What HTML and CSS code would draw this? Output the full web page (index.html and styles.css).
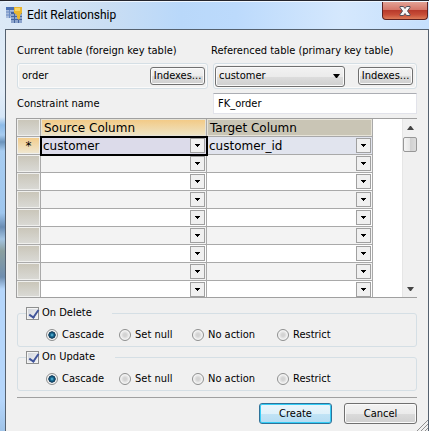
FILE: index.html
```html
<!DOCTYPE html>
<html lang="en">
<head>
<meta charset="utf-8">
<title>Edit Relationship</title>
<link rel="stylesheet" href="styles.css">
</head>
<body>
<svg class="defs" aria-hidden="true">
  <symbol id="down" viewBox="0 0 5 3"><path d="M0 0h5v1H4v1H3v1H2V2H1V1H0z"/></symbol>
</svg>
<main class="window">
  <header class="titlebar">
    <svg class="logo" viewBox="0 0 16 16" aria-hidden="true">
      <rect x="0" y="0" width="11" height="11" fill="#a9bcdc"/>
      <path d="M0 0h11v3H0z" fill="#4a70b4"/>
      <path d="M0 5h11M0 8h11M3.500 3v8" stroke="#6c8cc2" fill="none"/>
      <rect x="5" y="5" width="11" height="11" fill="#8ea5cc"/>
      <path d="M5 5h11v2H5z" fill="#41629f"/>
      <path d="M5 9.500h11M5 12.500h11M8.500 7v9M12.500 7v9" stroke="#45659f" fill="none"/>
      <path d="M8 0h8v6l-2 2v3l-1 2-2-2V8L8 6z" fill="#e9b62f"/>
      <path d="M9 1h5v3H9z" fill="#f8d565"/>
    </svg>
    <h1>Edit Relationship</h1>
    <button class="close" type="button" aria-label="Close">
      <svg viewBox="0 0 12 10" aria-hidden="true"><path d="M1 .5h3.500L6 2.500 7.500.5H11v1L8.500 5 11 8.500v1H7.500L6 7.500 4.500 9.500H1v-1L3.500 5 1 1.500z" fill="#f6f6f6" stroke="#53515c"/></svg>
    </button>
  </header>
  <form class="client">
    <div class="tables">
      <section>
        <h2>Current table (foreign key table)</h2>
        <div class="box">
          <span class="name">order</span>
          <button class="btn small" type="button">Indexes...</button>
        </div>
      </section>
      <section>
        <h2 class="wide">Referenced table (primary key table)</h2>
        <div class="box">
          <div class="picker">
            <select aria-label="Referenced table"><option>customer</option></select>
            <svg viewBox="0 0 7 4" aria-hidden="true"><path d="M0 0h7L4 4H3z"/></svg>
          </div>
          <button class="btn small" type="button">Indexes...</button>
        </div>
      </section>
      <label for="constraint">Constraint name</label>
      <input id="constraint" class="text" type="text" value="FK_order">
    </div>

    <div class="sheet">
      <table>
        <colgroup><col class="marker"><col><col></colgroup>
        <thead>
          <tr><th class="mark"></th><th class="current">Source Column</th><th>Target Column</th></tr>
        </thead>
        <tbody>
          <tr class="active"><td class="mark">*</td>
            <td class="focus"><div class="combo"><select aria-label="Source column 1"><option>customer</option></select><span><svg><use href="#down"/></svg></span></div></td>
            <td><div class="combo"><select aria-label="Target column 1"><option>customer_id</option></select><span><svg><use href="#down"/></svg></span></div></td></tr>
          <tr><td class="mark"></td>
            <td><div class="combo"><select aria-label="Source column 2"></select><span><svg><use href="#down"/></svg></span></div></td>
            <td><div class="combo"><select aria-label="Target column 2"></select><span><svg><use href="#down"/></svg></span></div></td></tr>
          <tr><td class="mark"></td>
            <td><div class="combo"><select aria-label="Source column 3"></select><span><svg><use href="#down"/></svg></span></div></td>
            <td><div class="combo"><select aria-label="Target column 3"></select><span><svg><use href="#down"/></svg></span></div></td></tr>
          <tr><td class="mark"></td>
            <td><div class="combo"><select aria-label="Source column 4"></select><span><svg><use href="#down"/></svg></span></div></td>
            <td><div class="combo"><select aria-label="Target column 4"></select><span><svg><use href="#down"/></svg></span></div></td></tr>
          <tr><td class="mark"></td>
            <td><div class="combo"><select aria-label="Source column 5"></select><span><svg><use href="#down"/></svg></span></div></td>
            <td><div class="combo"><select aria-label="Target column 5"></select><span><svg><use href="#down"/></svg></span></div></td></tr>
          <tr><td class="mark"></td>
            <td><div class="combo"><select aria-label="Source column 6"></select><span><svg><use href="#down"/></svg></span></div></td>
            <td><div class="combo"><select aria-label="Target column 6"></select><span><svg><use href="#down"/></svg></span></div></td></tr>
          <tr><td class="mark"></td>
            <td><div class="combo"><select aria-label="Source column 7"></select><span><svg><use href="#down"/></svg></span></div></td>
            <td><div class="combo"><select aria-label="Target column 7"></select><span><svg><use href="#down"/></svg></span></div></td></tr>
          <tr><td class="mark"></td>
            <td><div class="combo"><select aria-label="Source column 8"></select><span><svg><use href="#down"/></svg></span></div></td>
            <td><div class="combo"><select aria-label="Target column 8"></select><span><svg><use href="#down"/></svg></span></div></td></tr>
          <tr><td class="mark"></td>
            <td><div class="combo"><select aria-label="Source column 9"></select><span><svg><use href="#down"/></svg></span></div></td>
            <td><div class="combo"><select aria-label="Target column 9"></select><span><svg><use href="#down"/></svg></span></div></td></tr>
        </tbody>
      </table>
      <div class="scroll" aria-hidden="true">
        <svg viewBox="0 0 7 4"><path d="M3 0h1l3 4H0z" fill="#444"/></svg>
        <div class="thumb"></div>
        <svg class="end" viewBox="0 0 7 4"><path d="M0 0h7L4 4H3z" fill="#444"/></svg>
      </div>
    </div>

    <fieldset class="rule delete">
      <legend><label><input type="checkbox" checked>On Delete</label></legend>
      <div class="choices">
        <label><input type="radio" name="delete" checked>Cascade</label>
        <label><input type="radio" name="delete">Set null</label>
        <label><input type="radio" name="delete">No action</label>
        <label><input type="radio" name="delete">Restrict</label>
      </div>
    </fieldset>
    <fieldset class="rule">
      <legend><label><input type="checkbox" checked>On Update</label></legend>
      <div class="choices">
        <label><input type="radio" name="update" checked>Cascade</label>
        <label><input type="radio" name="update">Set null</label>
        <label><input type="radio" name="update">No action</label>
        <label><input type="radio" name="update">Restrict</label>
      </div>
    </fieldset>

    <footer>
      <button class="btn default" type="submit">Create</button>
      <button class="btn" type="button">Cancel</button>
    </footer>
    <svg class="grip" viewBox="0 0 11 11" aria-hidden="true"><path d="M0 11L11 0M4 11l7-7M8 11l3-3" stroke="#8f8f8f" fill="none"/></svg>
  </form>
</main>
</body>
</html>
```
FILE: styles.css
```css
* {
  box-sizing: border-box;
}

body {
  margin: 0;
  color: #000;
  font: 11px/14px "DejaVu Sans Condensed", "Noto Sans", sans-serif;
}

h1,
h2 {
  margin: 0;
  font-weight: normal;
}

button,
input,
select {
  margin: 0;
  color: inherit;
  font: inherit;
}

.defs {
  position: absolute;
  width: 0;
  height: 0;
}

/* Window frame */
.window {
  display: flex;
  flex-direction: column;
  min-height: 100vh;
  padding: 0 0 0 5px;
  border-top: 1px solid #24252d;
  background: linear-gradient(#dce9f6 0, #e2edf8 90px, #d5e6f7 116px, #8dbbe8 124px, #a6cbf0 134px, #6b93bb 141px, #a8cdf1 150px, #9ec6ee 212px, #6a8db4 226px, #a3c4e2 238px, #8a9f9f 250px, #6f8eb0 276px, #b5d6fb 288px, #b5d6fb 400px, #9fc3e8 430px);
}

.titlebar {
  display: flex;
  align-items: flex-start;
  height: 28px;
  margin-left: -5px;
  padding-left: 6px;
  border-top: 1px solid #eef6ff;
  border-top-left-radius: 6px;
  background: linear-gradient(90deg, #dce9f6, #cadef3 25%, #b9d8fa 42%, #bcdafc 55%, #d5e8fd 80%, #c5dffc);
}

.logo {
  width: 16px;
  height: 16px;
  margin-top: 5px;
}

.titlebar h1 {
  flex: 1;
  padding: 5px 0 0 5px;
  font: 12px/16px Roboto, sans-serif;
}

.close {
  display: grid;
  place-items: center;
  width: 46px;
  height: 18px;
  margin-right: 1px;
  padding: 0;
  border: 1px solid #5c2222;
  border-top: 0;
  border-radius: 0 0 4px 4px;
  background: linear-gradient(#e2a195, #d5776a 45%, #b83a2b 50%, #c84e38 75%, #dd7c59);
  box-shadow: 0 0 1px #fff;
}

.close svg {
  width: 12px;
  height: 10px;
}

.client {
  position: relative;
  flex: 1;
  padding: 14px 11px 6px;
  border: solid #55616f;
  border-width: 1px 1px 0;
  background: #f0f0f0;
}

/* Table pickers */
.tables {
  display: grid;
  grid-template-columns: 191fr 204fr;
  align-items: center;
  column-gap: 5px;
  row-gap: 4px;
}

h2 {
  font-size: 11px;
  line-height: 14px;
  white-space: nowrap;
}

h2.wide {
  margin-left: -2px;
}

.box {
  display: flex;
  align-items: center;
  justify-content: space-between;
  height: 26px;
  margin-top: 5px;
  padding: 0 2px 0 4px;
  border: 1px solid #d5dfe5;
  border-radius: 3px;
  box-shadow: inset 0 0 0 1px #fafafa;
}

.tables section + section .box {
  padding: 0 3px 0 1px;
}

.btn {
  width: 73px;
  height: 21px;
  padding: 0;
  border: 1px solid #707070;
  border-radius: 3px;
  background: linear-gradient(#f3f3f3, #ebebeb 50%, #dcdcdc 50%, #cfcfcf);
  box-shadow: inset 0 0 0 1px #fafafa;
  white-space: nowrap;
}

.btn.small {
  width: 55px;
  height: 18px;
}

.btn.default {
  border-color: #2f7299;
  background: linear-gradient(#eaf5fb, #dff1fa 50%, #c2e4f6 50%, #b5dcf2);
  box-shadow: inset 0 0 0 1px #34cdf6;
}

.picker {
  display: grid;
  align-items: center;
  width: 130px;
}

.picker select,
.picker svg {
  grid-area: 1 / 1;
}

.picker select {
  width: 100%;
  height: 21px;
  padding: 0 3px;
  border: 1px solid #707070;
  border-radius: 3px;
  appearance: none;
  background: linear-gradient(#f2f2f2, #ebebeb 50%, #dddddd 50%, #cfcfcf);
  box-shadow: inset 0 0 0 1px #fafafa;
}

.picker svg {
  justify-self: end;
  width: 7px;
  height: 4px;
  margin-right: 5px;
  pointer-events: none;
}

.text {
  width: 100%;
  height: 21px;
  padding: 0 4px;
  border: 1px solid #e2e3ea;
  border-top-color: #abadb3;
  background: #fff;
}

/* Column mapping */
.sheet {
  display: grid;
  grid-template-columns: 1fr 15px;
  column-gap: 29px;
  margin: 4px 0 0 -1px;
  border: solid #a0a0a0;
  border-width: 1px 0 1px 1px;
  background: #fff;
}

table {
  width: 100%;
  border-collapse: separate;
  border-spacing: 0;
  table-layout: fixed;
  font: 12px/14px "DejaVu Sans", sans-serif;
}

.marker {
  width: 24px;
}

th,
td {
  height: 18px;
  padding: 0;
  border: solid #a9a9a9;
  border-width: 0 1px 1px 0;
}

th {
  padding-left: 3px;
  background: #c9c5b5;
  box-shadow: inset 0 0 0 1px #e6e3d8;
  font-weight: normal;
  text-align: left;
}

th.current {
  background: linear-gradient(#f3c983, #ede5c8);
}

.mark {
  background: linear-gradient(#c9c5b8, #dadad6);
  box-shadow: inset 0 0 0 1px #f0f0ee;
  text-align: center;
}

.active .mark {
  background: linear-gradient(#f3cb88, #efe8d4);
}

tbody tr:nth-child(even) {
  background: #f3f3f3;
}

.active {
  background: #e1e4ee;
}

.focus {
  outline: 2px solid #000;
  outline-offset: -1px;
  background: #dcdbea;
}

.combo {
  display: grid;
  align-items: center;
  height: 17px;
}

.combo select,
.combo > span {
  grid-area: 1 / 1;
}

.combo select {
  width: 100%;
  height: 16px;
  padding: 0 16px 0 2px;
  border: 0;
  appearance: none;
  background: none;
}

.combo > span {
  display: grid;
  place-items: center;
  justify-self: end;
  width: 15px;
  height: 15px;
  margin-right: 1px;
  border: 1px solid #a0a0a0;
  background: #f0f0f0;
  pointer-events: none;
}

.combo svg {
  width: 5px;
  height: 3px;
}

tbody tr:last-child td {
  height: 16px;
  border-bottom: 0;
}

tbody tr:last-child .combo {
  height: 16px;
}

.scroll {
  display: flex;
  flex-direction: column;
  align-items: center;
  padding: 7px 0 6px;
  border-left: 1px solid #e6e6e6;
  background: #f0f0f0;
}

.scroll svg {
  width: 7px;
  height: 4px;
}

.thumb {
  width: 14px;
  height: 15px;
  margin-top: 7px;
  border: 1px solid #979797;
  border-radius: 2px;
  background: linear-gradient(90deg, #f4f4f4, #e6e6e6 50%, #d0d0d0 50%, #dcdcdc);
}

.scroll .end {
  margin-top: auto;
}

/* Referential actions */
.rule {
  min-width: 0;
  margin: 0 0 3px;
  padding: 0 0 4px 28px;
  border: 1px solid #d5dfe5;
  border-radius: 3px;
}

.rule.delete {
  margin-top: 8px;
}

.rule legend {
  margin-left: -20px;
  padding: 0 20px 0 0;
}

.rule label {
  display: flex;
  align-items: center;
  gap: 3px;
  height: 14px;
  white-space: nowrap;
}

.choices {
  display: grid;
  grid-template-columns: 73px 73px 85px 1fr;
  padding-top: 8px;
}

.rule .choices label {
  gap: 4px;
}

.rule input {
  flex: none;
  width: 12px;
  height: 12px;
  appearance: none;
}

.rule [type="radio"] {
  border: 1px solid #8e8f8f;
  border-radius: 50%;
  background: radial-gradient(#d3d3d3 20%, #f4f4f4 65%);
  box-shadow: inset 0 0 0 1px #f4f4f4;
}

.rule [type="radio"]:checked {
  background: radial-gradient(circle at 50% 50%, #6fc9e8 0, #1c7098 22%, #0b3454 48%, #f0f0f0 56%);
}

.rule [type="checkbox"] {
  display: grid;
  width: 13px;
  height: 13px;
  border: 1px solid #8e8f8f;
  background: linear-gradient(135deg, #cfd3da, #f4f4f6);
  box-shadow: inset 0 0 0 1px #f4f4f4;
}

.rule [type="checkbox"]:checked::before {
  width: 4px;
  height: 8px;
  margin: 0 0 0 4px;
  border: solid #40549a;
  border-width: 0 2px 2px 0;
  content: "";
  transform: rotate(35deg);
}

footer {
  display: flex;
  justify-content: flex-end;
  gap: 12px;
  margin-top: 6px;
  padding-top: 5px;
  border-top: 1px solid #a0a0a0;
}

.grip {
  position: absolute;
  right: 0;
  bottom: 0;
  width: 11px;
  height: 11px;
}
```
